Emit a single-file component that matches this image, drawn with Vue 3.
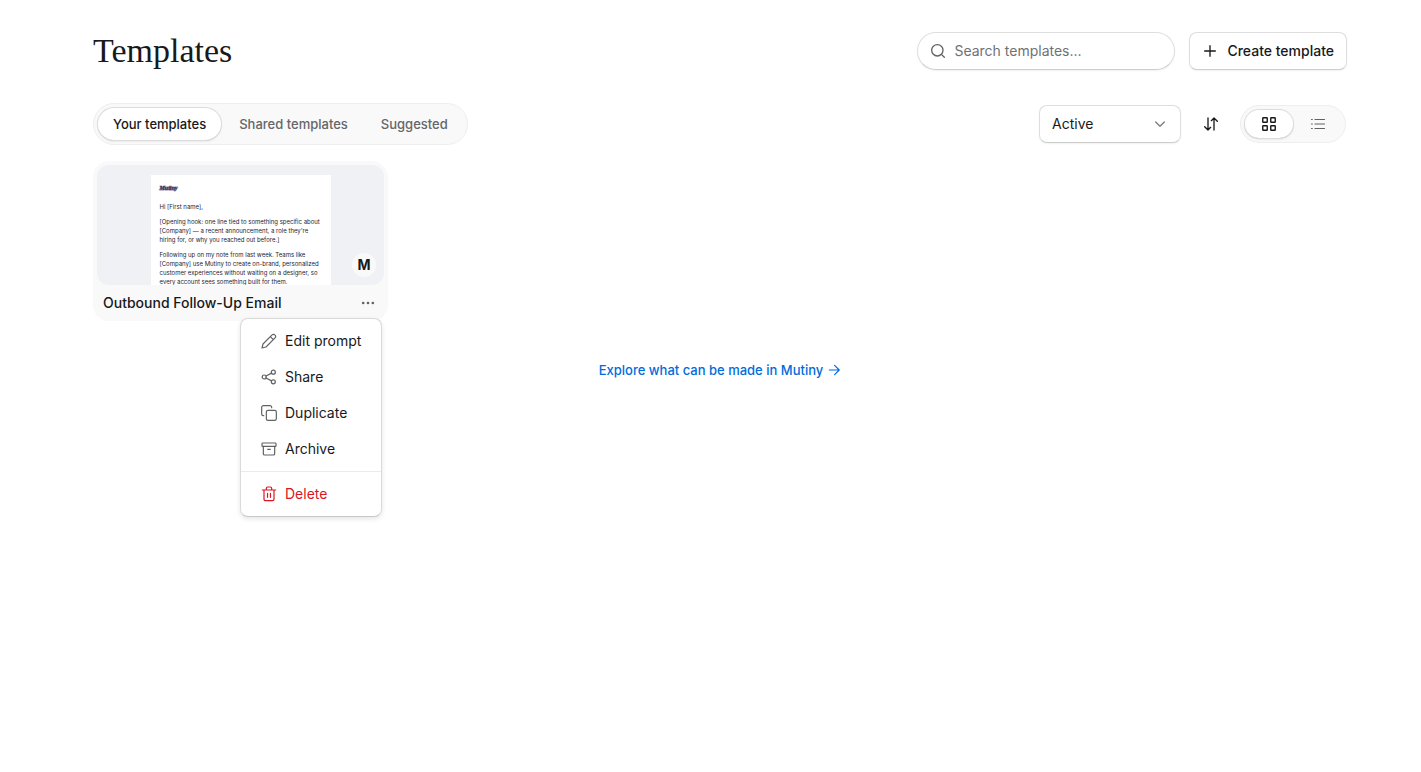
<script setup>
import { ref } from 'vue'

const tabs = ['Your templates', 'Shared templates', 'Suggested']
const activeTab = ref(tabs[0])
const view = ref('grid')
const status = ref('Active')
const query = ref('')

const actions = [
  { label: 'Edit prompt', icon: 'pencil' },
  { label: 'Share', icon: 'share' },
  { label: 'Duplicate', icon: 'copy' },
  { label: 'Archive', icon: 'archive' },
]
</script>

<template>
  <main class="page">
    <header class="row">
      <h1>Templates</h1>
      <div class="header-actions">
        <label class="search">
          <svg class="icon" viewBox="0 0 24 24" aria-hidden="true"><circle cx="11" cy="11" r="8.5" /><path d="m21.500 21.500-4.400-4.400" /></svg>
          <input v-model="query" type="text" placeholder="Search templates..." aria-label="Search templates" />
        </label>
        <button class="create" type="button">
          <svg class="icon" viewBox="0 0 24 24" aria-hidden="true"><path d="M4 12h16M12 4v16" /></svg>
          Create template
        </button>
      </div>
    </header>

    <div class="row toolbar">
      <nav class="tabs">
        <button v-for="tab in tabs" :key="tab" type="button" class="tab" :class="{ selected: tab === activeTab }" @click="activeTab = tab">{{ tab }}</button>
      </nav>
      <div class="filters">
        <div class="select">
          <select v-model="status" aria-label="Status">
            <option>Active</option>
            <option>Archived</option>
          </select>
          <svg class="icon chevron" viewBox="0 0 24 24" aria-hidden="true"><path d="m5.500 9 6.500 6.500L18.500 9" /></svg>
        </div>
        <button class="sort" type="button" aria-label="Sort">
          <svg class="icon" viewBox="0 0 24 24" aria-hidden="true"><path d="M7.500 3v18M2.500 16l5 5 4-4M16.500 21V3M12.500 7l4-4 5 5" /></svg>
        </button>
        <div class="views">
          <button type="button" class="view" :class="{ selected: view === 'grid' }" aria-label="Grid view" @click="view = 'grid'">
            <svg class="icon" viewBox="0 0 16 16" aria-hidden="true">
              <rect x="1.75" y="1.75" width="4.5" height="4.5" rx=".5" /><rect x="9.75" y="1.75" width="4.5" height="4.5" rx=".5" />
              <rect x="1.75" y="9.75" width="4.5" height="4.5" rx=".5" /><rect x="9.75" y="9.75" width="4.5" height="4.5" rx=".5" />
            </svg>
          </button>
          <button type="button" class="view" :class="{ selected: view === 'list' }" aria-label="List view" @click="view = 'list'">
            <svg class="icon thin" viewBox="0 0 16 16" aria-hidden="true"><path d="M5 3.500h9.500M5 8h9.500M5 12.500h9.500M1.500 3.500h.8M1.500 8h.8M1.500 12.500h.8" /></svg>
          </button>
        </div>
      </div>
    </div>

    <section class="cards">
      <article class="card">
        <div class="thumb">
          <div class="doc">
            <div class="brand">Mutiny</div>
            <p>Hi [First name],</p>
            <p>[Opening hook: one line tied to something specific about<br />[Company] — a recent announcement, a role they're<br />hiring for, or why you reached out before.]</p>
            <p>Following up on my note from last week. Teams like<br />[Company] use Mutiny to create on-brand, personalized<br />customer experiences without waiting on a designer, so<br />every account sees something built for them.</p>
          </div>
          <span class="avatar">M</span>
        </div>
        <div class="card-foot">
          <h2>Outbound Follow-Up Email</h2>
          <button class="more" type="button" aria-label="More actions">
            <svg viewBox="0 0 16 16" aria-hidden="true"><circle cx="2.500" cy="8" r="1.500" /><circle cx="8" cy="8" r="1.500" /><circle cx="13.500" cy="8" r="1.500" /></svg>
          </button>
        </div>

        <div class="menu" role="menu">
          <div class="menu-group">
            <button v-for="action in actions" :key="action.label" type="button" role="menuitem" class="item">
              <svg class="icon" viewBox="0 0 24 24" aria-hidden="true">
                <path v-if="action.icon === 'pencil'" d="M16.6 2.9a2.9 2.9 0 0 1 4.2 0l.3.3a2.9 2.9 0 0 1 0 4.2L7.5 21 1.5 22.5 3 16.5ZM14 5.5l4.5 4.5" />
                <g v-else-if="action.icon === 'share'"><circle cx="18.5" cy="4.8" r="3" /><circle cx="4.8" cy="12" r="3" /><circle cx="18.5" cy="19.2" r="3" /><path d="m7.5 13.5 8.3 4.3M15.8 6.2 7.5 10.5" /></g>
                <g v-else-if="action.icon === 'copy'"><rect x="8" y="8" width="15" height="15" rx="2.5" /><path d="M4 16h-.5A2.5 2.5 0 0 1 1 13.500V3.500A2.500 2.500 0 0 1 3.500 1h10A2.500 2.500 0 0 1 16 3.500V4" /></g>
                <g v-else><rect x="1.500" y="3" width="21" height="5" rx="1" /><path d="M3.500 8v11a2 2 0 0 0 2 2h13a2 2 0 0 0 2-2V8M10 12.500h4" /></g>
              </svg>
              {{ action.label }}
            </button>
          </div>
          <div class="menu-group">
            <button type="button" role="menuitem" class="item danger">
              <svg class="icon" viewBox="0 0 24 24" aria-hidden="true"><path d="M2 6h20M19.500 6v14a2 2 0 0 1-2 2h-11a2 2 0 0 1-2-2V6M8 6V3.500a2 2 0 0 1 2-2h4a2 2 0 0 1 2 2V6M9.800 11v6M14.200 11v6" /></svg>
              Delete
            </button>
          </div>
        </div>
      </article>
    </section>

    <a class="explore" href="#">
      Explore what can be made in Mutiny
      <svg class="icon" viewBox="0 0 24 24" aria-hidden="true"><path d="M4 12h17M13 4l8 8-8 8" /></svg>
    </a>
  </main>
</template>

<style>
body {
  background: #fff;
}
</style>

<style scoped>
.page {
  box-sizing: border-box;
  display: flex;
  flex-direction: column;
  min-height: 100vh;
  padding: 32px 74px 32px 93px;
  color: #18191b;
  font: 400 14px/20px Inter, "Liberation Sans", sans-serif;
}
button,
input,
select {
  margin: 0;
  padding: 0;
  border: 0;
  background: none;
  color: inherit;
  font: inherit;
}
.icon {
  flex: none;
  width: 16px;
  height: 16px;
  fill: none;
  stroke: currentColor;
  stroke-width: 2;
  stroke-linecap: round;
  stroke-linejoin: round;
}
.row {
  display: flex;
  align-items: center;
  justify-content: space-between;
}
h1 {
  margin: 0;
  font: 400 34px/38px "Liberation Serif", serif;
}
.header-actions {
  display: flex;
  gap: 14px;
}
.search,
.create,
.select {
  box-sizing: border-box;
  height: 38px;
  border: 1px solid #dedede;
  border-bottom-color: #cdcdcd;
  background: #fff;
  box-shadow: 0 1px 2px rgba(0, 0, 0, 0.06);
}
.search {
  display: flex;
  align-items: center;
  gap: 8px;
  width: 258px;
  padding: 0 12px;
  border-radius: 19px;
  color: #606366;
}
.search input {
  flex: 1;
  min-width: 0;
  outline: 0;
}
.search input::placeholder {
  color: #6f7275;
}
.create {
  display: flex;
  align-items: center;
  gap: 9px;
  padding: 0 12px;
  border-radius: 8px;
  font-weight: 500;
}
.toolbar {
  margin-top: 33px;
}
.tabs,
.views {
  display: flex;
  border: 1px solid #eee;
  border-radius: 21px;
  background: #f9f9f9;
}
.tabs {
  gap: 1px;
  padding: 3px;
}
.tab {
  height: 34px;
  padding: 0 16px;
  border-radius: 17px;
  color: #646669;
  font-size: 13px;
  font-weight: 500;
}
.selected {
  background: #fff;
  color: #18191b;
  box-shadow: inset 0 0 0 1px #dcdcdc, inset 0 -1px 0 #ccc, 0 1px 2px rgba(0, 0, 0, 0.06);
}
.filters {
  display: flex;
  align-items: center;
  gap: 12px;
  padding-right: 1px;
}
.select {
  position: relative;
  width: 142px;
  border-radius: 8px;
}
.select select {
  width: 100%;
  height: 100%;
  padding: 0 36px 0 12px;
  appearance: none;
}
.chevron {
  position: absolute;
  top: 10px;
  right: 12px;
  color: #7b7d80;
  pointer-events: none;
}
.sort {
  display: grid;
  place-items: center;
  width: 35px;
  height: 36px;
}
.views {
  padding: 3px;
}
.view {
  display: grid;
  place-items: center;
  width: 50px;
  height: 30px;
  border-radius: 15px;
}
.views .view:last-child {
  width: 48px;
}
.view .icon {
  stroke-width: 1.4;
}
.view .thin {
  color: #606366;
  stroke-width: 1.2;
}
.cards {
  display: grid;
  grid-template-columns: repeat(4, 295px);
  gap: 16px;
  margin-top: 16px;
}
.card {
  position: relative;
  box-sizing: border-box;
  padding: 4px 4px 0;
  border-radius: 16px;
  background: #f9f9f9;
}
.thumb {
  position: relative;
  height: 120px;
  overflow: hidden;
  border-radius: 12px;
  background: #f0f1f5;
}
.doc {
  box-sizing: border-box;
  width: 180px;
  height: 120px;
  margin: 10px auto 0;
  padding: 9px 9px 0;
  background: #fff;
  color: #202431;
  font-size: 6px;
  line-height: 9px;
  white-space: nowrap;
}
.brand {
  margin-bottom: 9px;
  color: #35204d;
  font: italic 700 6px/9px "Liberation Serif", serif;
  -webkit-text-stroke: 1px #35204d80;
}
.doc p {
  margin: 0 0 6px;
}
.avatar {
  position: absolute;
  right: 8px;
  bottom: 8px;
  width: 24px;
  height: 24px;
  border-radius: 50%;
  background: #f9f9f9;
  font-size: 14px;
  font-weight: 700;
  line-height: 24px;
  text-align: center;
}
.card-foot {
  display: flex;
  align-items: center;
  justify-content: space-between;
  height: 36px;
  padding: 0 8px 0 6px;
}
h2 {
  margin: 0;
  font-size: 14px;
  font-weight: 500;
  line-height: 20px;
}
.more {
  display: grid;
  place-items: center;
  width: 16px;
  height: 20px;
}
.more svg {
  width: 14px;
  height: 14px;
  fill: #606366;
}
.menu {
  position: absolute;
  z-index: 1;
  top: calc(100% - 3px);
  right: 6px;
  width: 140px;
  border: 1px solid #dadada;
  border-bottom-color: #c8c8c8;
  border-radius: 8px;
  background: #fff;
  box-shadow: 0 2px 5px rgba(0, 0, 0, 0.1);
}
.menu-group {
  padding: 4px;
}
.menu-group + .menu-group {
  border-top: 1px solid #ebebeb;
}
.item {
  display: flex;
  align-items: center;
  gap: 8px;
  width: 100%;
  height: 36px;
  padding: 0 16px;
  white-space: nowrap;
}
.item .icon {
  color: #606366;
  stroke-width: 1.8;
}
.item.danger,
.item.danger .icon {
  color: #dc1424;
}
.explore {
  display: flex;
  align-items: center;
  align-self: center;
  gap: 4px;
  margin-top: 39px;
  color: #006cdc;
  font-size: 13px;
  font-weight: 500;
  text-decoration: none;
}
.explore .icon {
  width: 14px;
  height: 14px;
}
</style>
